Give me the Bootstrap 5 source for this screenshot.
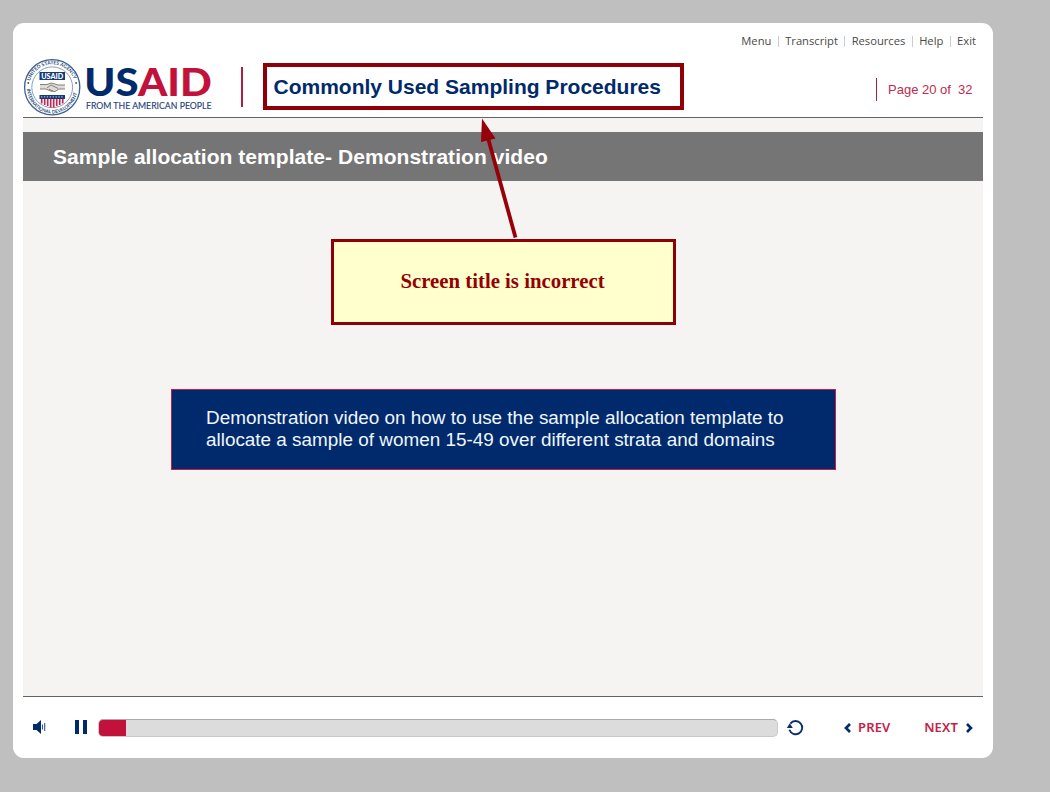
<!DOCTYPE html>
<html lang="en">
<head>
<meta charset="utf-8">
<meta name="viewport" content="width=device-width, initial-scale=1">
<title>Commonly Used Sampling Procedures</title>
<link href="https://cdn.jsdelivr.net/npm/bootstrap@5.3.0/dist/css/bootstrap.min.css" rel="stylesheet">
<style>
:root{--navy:#002a6c;--crimson:#c2113a;--mark:#8f0006}
body{background:#bfbfbf;font-family:"Liberation Sans",Arial,sans-serif;height:792px;overflow:hidden}
.player{width:980px;height:735px;margin:23px 0 0 13px;border-radius:11px;padding:0 10px}
.top{height:94px}
.links{height:36px;padding-right:7px;font:11.2px/36px "Open Sans","Noto Sans",sans-serif;color:#4a4a4a}
.links a{color:inherit;text-decoration:none;white-space:nowrap}
.links i{width:1px;height:11px;background:#ccc;margin:0 6.4px}
.brand-row{height:58px}
.rule{width:2px;height:40px;background:#b01f40;margin:8px 20px 0 29px}
.screen-title{width:421px;height:47px;border:4px solid var(--mark);margin-top:4px;padding-left:6.5px;font-size:21px;line-height:40px;font-weight:700;color:var(--navy);white-space:nowrap}
.page-no{border-left:1px solid #a81f42;height:23px;width:107px;padding-left:11px;margin-top:19px;font-size:13px;line-height:23px;color:#c22a4e;white-space:pre}
.stage{height:580px;border-top:1px solid #62645f;border-bottom:1px solid #62645f;background:#f5f4f2;padding-top:14px}
.strip{height:49px;background:#757575;color:#fff;font-size:21px;line-height:49px;font-weight:700;padding-left:30px;letter-spacing:.05px;white-space:nowrap}
.note{width:345px;height:86px;margin:58px 0 0 308px;border:3px solid var(--mark);background:#ffffcd;color:#940004;font:700 20.8px/78px "Liberation Serif","Times New Roman",serif;padding-right:2px;white-space:nowrap}
.blurb{width:665px;height:81px;margin:64px 0 0 148px;border:1px solid #c01f48;background:var(--navy);color:#f0f6ff;padding:17px 0 0 34px;font-size:18.9px;line-height:22px;white-space:nowrap}
.controls{height:61px}
.track{width:680px;height:18px;border-radius:5px;background:#dcdcdc;border:1px solid #c9c9c9;border-top-color:#aaa}
.track .progress-bar{background:var(--crimson);width:27px}
.step{color:#c42147;font:600 13px/18px "Noto Sans","Open Sans",sans-serif;white-space:nowrap}
.step span{margin-top:-2px;letter-spacing:.15px}
.pointer{left:470px;top:110px}
svg{flex:none;display:block}
</style>
</head>
<body>
<main class="player bg-white">
  <header class="top">
    <nav class="links d-flex justify-content-end align-items-center">
      <a href="#">Menu</a><i></i><a href="#">Transcript</a><i></i><a href="#">Resources</a><i></i><a href="#">Help</a><i></i><a href="#">Exit</a>
    </nav>
    <div class="brand-row d-flex align-items-start">
      <svg width="189" height="58" viewBox="23 58 189 58" overflow="visible" aria-label="USAID">
        <defs>
          <path id="arcTop" d="M29.600 82a23 23 0 0 1 45.200 0"/>
          <path id="arcBottom" d="M27.200 84a25.200 25.200 0 1 0 50 0"/>
        </defs>
        <circle cx="52.2" cy="86.3" r="27.6" fill="#fff" stroke="#3f5f8b" stroke-width="1.3"/>
        <circle cx="52.2" cy="86.3" r="20.4" fill="#fff" stroke="#6d86a8" stroke-width=".8"/>
        <g font-family="Lato,sans-serif" font-weight="700" fill="#294d7d" font-size="4.9">
          <text><textPath href="#arcTop" startOffset="2">UNITED STATES AGENCY</textPath></text>
          <text font-size="4.700"><textPath href="#arcBottom" startOffset="4">INTERNATIONAL DEVELOPMENT</textPath></text>
        </g>
        <circle cx="28.3" cy="82" r=".9" fill="#294d7d"/><circle cx="76.1" cy="82" r=".9" fill="#294d7d"/>
        <path fill="#123c75" d="M39.5 71h25.5v8h-25.5zM39.5 94h25.500v4h-25.500z"/>
        <text x="41.200" y="77.500" textLength="22" lengthAdjust="spacingAndGlyphs" font-family="Lato,sans-serif" font-weight="900" font-size="7" fill="#fff">USAID</text>
        <path d="M41 95.800h23" stroke="#b7c5d8" stroke-width="1.200" stroke-dasharray="1.300 1.600"/>
        <path d="M40 83.500h7l4-1.500 4 1 3 1h7v4h-6l-4 2.500-4-.300-5-2.200h-6z" fill="#dddcd7"/>
        <path d="M40 83.500h7l4-1.500 4 1 3 1h7M40 88h6l5 2.200 4 .300 4-2.500h6M47 87l4-3 7 3.400M49 88.200l4 1.800" fill="none" stroke="#77756d" stroke-width=".9"/>
        <path d="M41.700 98v4.500M44.700 98v6M47.700 98v7M50.700 98v8.400M53.700 98v8.400M56.700 98v7M59.700 98v6M62.700 98v4.500" stroke="#c52750" stroke-width="1.700"/>
        <text x="84.300" y="95" textLength="127.500" lengthAdjust="spacingAndGlyphs" font-family="Lato,sans-serif" font-weight="900" font-size="37" fill="#002a6c">US<tspan fill="#c2113a">AID</tspan></text>
        <text x="86" y="107.500" textLength="125.500" lengthAdjust="spacingAndGlyphs" font-family="Lato,sans-serif" font-weight="400" font-size="10.200" fill="#1f4279" stroke="#1f4279" stroke-width=".15">FROM THE AMERICAN PEOPLE</text>
      </svg>
      <div class="rule"></div>
      <h1 class="screen-title mb-0">Commonly Used Sampling Procedures</h1>
      <div class="page-no ms-auto">Page 20 of  32</div>
    </div>
  </header>
  <section class="stage">
    <h2 class="strip mb-0">Sample allocation template- Demonstration video</h2>
    <div class="note text-center">Screen title is incorrect</div>
    <div class="blurb">Demonstration video on how to use the sample allocation template to<br>allocate a sample of women 15-49 over different strata and domains</div>
  </section>
  <footer class="controls d-flex align-items-center">
    <svg class="ms-2" width="16" height="18" viewBox="31 719 16 18"><path fill="#002a6c" d="M33 724h3.500l4.500-4v14l-4.500-4H33z"/><path d="M42.500 724.500v5M44.700 723v8" stroke="#35568a" stroke-width="1.100"/></svg>
    <svg width="51" height="18" viewBox="47 719 51 18"><path fill="#002a6c" d="M75 720h4v14h-4zM83 720h4v14h-4z"/></svg>
    <div class="progress track"><div class="progress-bar"></div></div>
    <svg width="65" height="18" viewBox="778 719 65 18"><path d="M789.400 729.800a6.600 6.600 0 1 0 1-6.200" fill="none" stroke="#0c2f66" stroke-width="1.900"/><path d="M786.800 728h6l-3-4.800z" fill="#0c2f66"/></svg>
    <a href="#" class="step d-flex align-items-center text-decoration-none"><svg width="15" height="18" viewBox="843 719 15 18"><path d="M850 724l-4 4 4 4" fill="none" stroke="#002a6c" stroke-width="2.600"/></svg><span>PREV</span></a>
    <a href="#" class="step d-flex align-items-center text-decoration-none ms-auto"><span>NEXT</span><svg width="25" height="18" viewBox="958 719 25 18"><path d="M967 724l4 4-4 4" fill="none" stroke="#002a6c" stroke-width="2.600"/></svg></a>
  </footer>
</main>
<svg class="pointer position-absolute" width="60" height="130" viewBox="470 110 60 130"><path d="M488 138L515.500 237.500" stroke="#970008" stroke-width="3.800"/><path d="M482 118.500L495.500 138.500 481 142z" fill="#970008"/></svg>
<script src="https://cdn.jsdelivr.net/npm/bootstrap@5.3.0/dist/js/bootstrap.bundle.min.js"></script>
</body>
</html>
